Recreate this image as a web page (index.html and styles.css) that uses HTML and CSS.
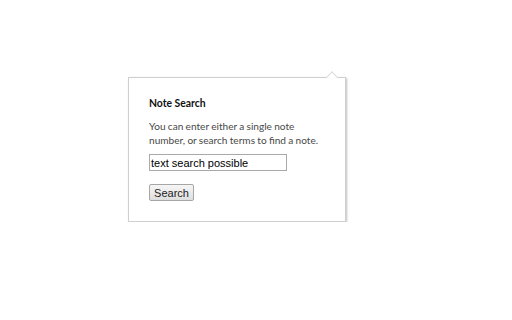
FILE: index.html
```html
<!DOCTYPE html>
<html>
<head>
<meta charset="utf-8">
<link rel="stylesheet" href="styles.css">
</head>
<body>
<div class="bubble">
  <div class="arrow"></div>
  <h1 class="title">Note Search</h1>
  <p class="desc">You can enter either a single note number, or search terms to find a note.</p>
  <input class="field" type="text" value="text search possible">
  <div class="actions"><button class="btn">Search</button></div>
</div>
</body>
</html>
```
FILE: styles.css
```css
html, body {
  margin: 0;
  padding: 0;
  background: #ffffff;
}
body {
  padding: 77px 0 0 128px;
  font-family: Lato, sans-serif;
}
.bubble {
  position: relative;
  box-sizing: border-box;
  width: 218px;
  height: 145px;
  border: 1px solid #cfcfcf;
  background: #fff;
  box-shadow: 1px 1px 2px rgba(0,0,0,0.25);
  padding: 18px 0 0 20px;
}
.arrow {
  position: absolute;
  top: -5px;
  right: 9px;
  width: 7px;
  height: 7px;
  background: #fff;
  border-top: 1px solid #dcdcdc;
  border-left: 1px solid #dcdcdc;
  transform: rotate(45deg);
}
.title {
  margin: 0;
  font-size: 10.4px;
  font-weight: bold;
  color: #111;
  line-height: 14px;
}
.desc {
  margin: 9px 0 0 0;
  font-size: 10.1px;
  color: #484848;
  line-height: 14px;
  width: 180px;
  word-spacing: -0.3px;
}
.field {
  display: block;
  box-sizing: border-box;
  margin: 7px 0 0 0;
  width: 138px;
  height: 17px;
  padding: 0 1px;
  border: 1px solid #a9a9a9;
  font-family: "Liberation Sans", Arial, sans-serif;
  font-size: 11px;
  color: #000;
  outline: none;
}
.actions {
  margin-top: 13px;
  display: flex;
}
.btn {
  box-sizing: border-box;
  width: 45px;
  height: 17px;
  padding: 0;
  border: 1px solid #a6a6a6;
  border-radius: 2px;
  background: linear-gradient(#f6f6f6, #dedede);
  font-family: "Liberation Sans", Arial, sans-serif;
  font-size: 11px;
  color: #222;
}
```
